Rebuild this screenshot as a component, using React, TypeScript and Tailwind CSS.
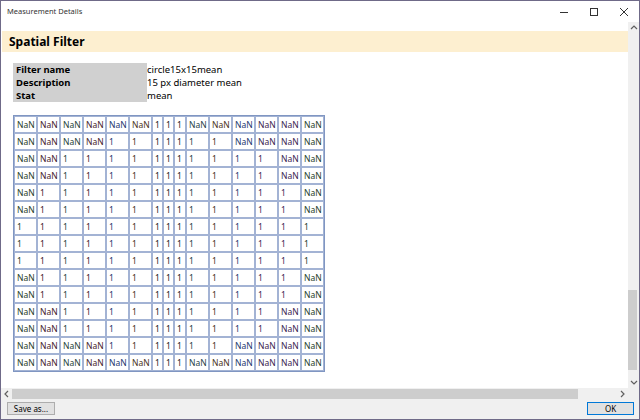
import React from 'react';

const SIZE = 15;
const grid = Array.from({ length: SIZE }, (_, i) =>
  Array.from({ length: SIZE }, (_, j) => ((i - 7) ** 2 + (j - 7) ** 2 <= 50 ? '1' : 'NaN'))
);

// column widths and the faint cleartype-ish tints of the text
const cols = [
  { w: 'w-[23px]', c: 'text-[#1f3d29]' },
  { w: 'w-[23px]', c: 'text-[#44202c]' },
  { w: 'w-[23px]', c: 'text-[#1f3f38]' },
  { w: 'w-[23px]', c: 'text-[#46222c]' },
  { w: 'w-[23px]', c: 'text-[#23366e]' },
  { w: 'w-[23px]', c: 'text-[#4a3220]' },
  { w: 'w-[11px]', c: 'text-[#222222]' },
  { w: 'w-[11px]', c: 'text-[#222222]' },
  { w: 'w-[12px]', c: 'text-[#222222]' },
  { w: 'w-[23px]', c: 'text-[#1f3f48]' },
  { w: 'w-[23px]', c: 'text-[#4a3220]' },
  { w: 'w-[23px]', c: 'text-[#23366e]' },
  { w: 'w-[23px]', c: 'text-[#3a2450]' },
  { w: 'w-[23px]', c: 'text-[#3a2450]' },
  { w: 'w-[23px]', c: 'text-[#1f3d29]' },
];

const info = [
  ['Filter name', 'circle15x15mean'],
  ['Description', '15 px diameter mean'],
  ['Stat', 'mean'],
];

function Arrow({ dir }: { dir: 'up' | 'down' | 'left' | 'right' }) {
  const pts = {
    up: '1,5 4,2 7,5',
    down: '1,2 4,5 7,2',
    left: '5,1 2,4 5,7',
    right: '2,1 5,4 2,7',
  }[dir];
  return (
    <svg width="8" height="8" viewBox="0 0 8 8">
      <polyline points={pts} fill="none" stroke="#606060" strokeWidth="1.2" />
    </svg>
  );
}

export default function App() {
  return (
    <div className="w-[640px] h-[420px] flex flex-col bg-white border border-[#6f6a88] overflow-hidden font-['Noto_Sans',sans-serif] text-[#1a1a1a]">
      {/* Title bar */}
      <div className="h-[21px] flex items-center shrink-0">
        <span className="pl-[6px] text-[7.5px] text-[#333]">Measurement Details</span>
        <div className="ml-auto flex items-center h-full">
          <div className="w-[30px] flex justify-center">
            <svg width="10" height="10" viewBox="0 0 10 10">
              <line x1="1" y1="5.5" x2="9" y2="5.5" stroke="#333" strokeWidth="1" />
            </svg>
          </div>
          <div className="w-[30px] flex justify-center">
            <svg width="10" height="10" viewBox="0 0 10 10">
              <rect x="1.5" y="1.5" width="7" height="7" fill="none" stroke="#333" strokeWidth="1" />
            </svg>
          </div>
          <div className="w-[30px] flex justify-center">
            <svg width="10" height="10" viewBox="0 0 10 10">
              <path d="M1 1 L9 9 M9 1 L1 9" stroke="#333" strokeWidth="1" />
            </svg>
          </div>
        </div>
      </div>

      {/* Body */}
      <div className="flex-1 flex min-h-0">
        <div className="flex-1 min-w-0 overflow-hidden pt-[9px]">
          <div className="ml-[1px] h-[21px] bg-[#fdefd0] flex items-center pl-[7px]">
            <span className="text-[12px] font-bold text-black">Spatial Filter</span>
          </div>

          <table className="mt-[11px] ml-[12px] border-collapse text-[9.5px] leading-[13px]">
            <tbody>
              {info.map(([k, v]) => (
                <tr key={k}>
                  <td className="w-[134px] h-[13px] bg-[#d0d0d0] font-bold pl-[3px] p-0 text-black">{k}</td>
                  <td className="h-[13px] p-0 text-black">{v}</td>
                </tr>
              ))}
            </tbody>
          </table>

          <table className="mt-[13px] ml-[12px] w-[312px] table-fixed border-separate border-spacing-0 border border-[#8096c2] text-[8.5px]">
            <colgroup>
              {cols.map((c, i) => (
                <col key={i} className={c.w} />
              ))}
            </colgroup>
            <tbody>
              {grid.map((row, i) => (
                <tr key={i}>
                  {row.map((v, j) => (
                    <td
                      key={j}
                      className={`h-[17px] border border-[#a3b3d4] pl-[2px] pr-0 py-0 leading-[11px] whitespace-nowrap overflow-hidden ${cols[j].c}`}
                    >
                      {v}
                    </td>
                  ))}
                </tr>
              ))}
            </tbody>
          </table>
        </div>

        {/* Vertical scrollbar */}
        <div className="w-[11px] bg-[#f0f0f0] flex flex-col items-center shrink-0">
          <div className="h-[11px] flex items-center justify-center">
            <Arrow dir="up" />
          </div>
          <div className="flex-1 w-full flex flex-col justify-end pb-[7px]">
            <div className="h-[80px] w-[9px] bg-[#cdcdcd]" />
          </div>
          <div className="h-[11px] flex items-center justify-center">
            <Arrow dir="down" />
          </div>
        </div>
      </div>

      {/* Horizontal scrollbar */}
      <div className="h-[12px] flex bg-[#f0f0f0] shrink-0">
        <div className="w-[11px] flex items-center justify-center">
          <Arrow dir="left" />
        </div>
        <div className="flex-1 flex items-center">
          <div className="h-[10px] w-[566px] bg-[#cdcdcd]" />
        </div>
        <div className="w-[11px] flex items-center justify-center">
          <Arrow dir="right" />
        </div>
        <div className="w-[11px]" />
      </div>

      {/* Buttons */}
      <div className="h-[19px] shrink-0 bg-[#f0f0f0] flex items-start justify-between px-[6px] pt-[2px]">
        <button className="w-[48px] h-[13px] bg-[#e1e1e1] border border-[#adadad] text-[8px] leading-[11px] text-black">
          Save as...
        </button>
        <button className="w-[47px] h-[13px] bg-[#e1e1e1] border border-[#0078d7] text-[8px] leading-[11px] text-black mr-[-1px]">
          OK
        </button>
      </div>
    </div>
  );
}
